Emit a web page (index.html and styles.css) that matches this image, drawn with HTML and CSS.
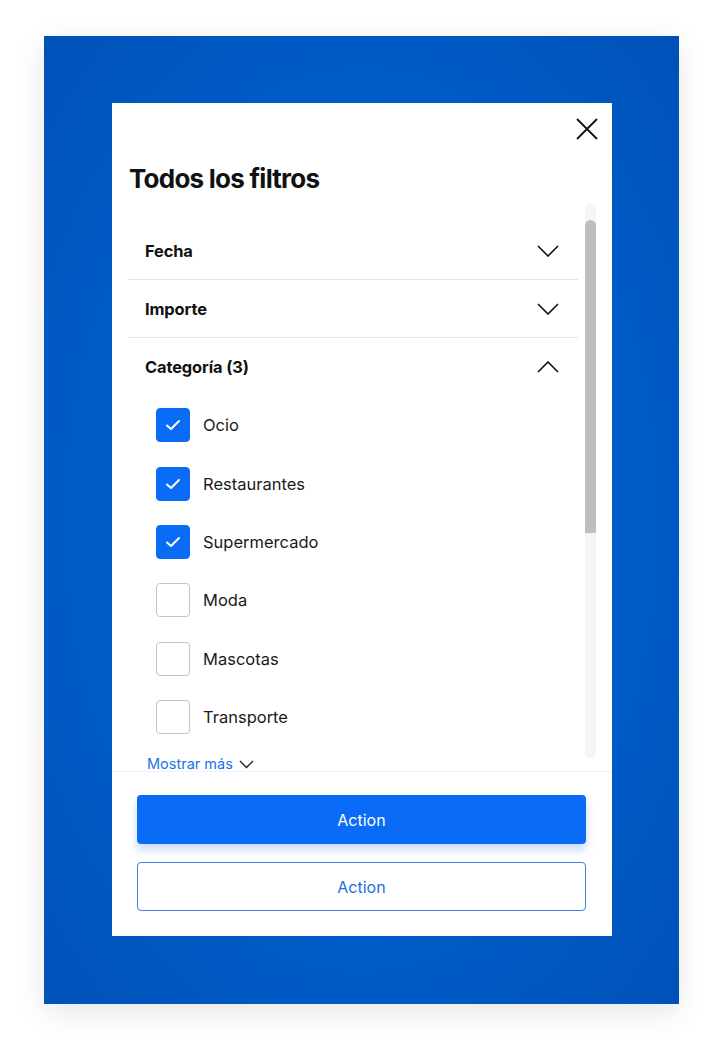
FILE: index.html
```html
<!DOCTYPE html>
<html lang="es">
<head>
<meta charset="utf-8">
<title>Todos los filtros</title>
<link rel="stylesheet" href="styles.css">
</head>
<body>
<div class="stage">
  <div class="modal">
    <div class="close-row">
      <button class="close" aria-label="Cerrar">
        <svg width="22" height="22" viewBox="0 0 22 22"><path d="M1 1 L21 21 M21 1 L1 21" stroke="#111" stroke-width="1.8" fill="none"/></svg>
      </button>
    </div>
    <h1 class="title">Todos los filtros</h1>
    <div class="scroll">
      <div class="list">
        <div class="acc-row bordered">
          <span class="acc-label">Fecha</span>
          <svg class="chev" width="22" height="12" viewBox="0 0 22 12"><path d="M1 1 L11 11 L21 1" stroke="#111" stroke-width="1.6" fill="none"/></svg>
        </div>
        <div class="acc-row bordered">
          <span class="acc-label">Importe</span>
          <svg class="chev" width="22" height="12" viewBox="0 0 22 12"><path d="M1 1 L11 11 L21 1" stroke="#111" stroke-width="1.6" fill="none"/></svg>
        </div>
        <div class="acc-row">
          <span class="acc-label">Categoría (3)</span>
          <svg class="chev" width="22" height="12" viewBox="0 0 22 12"><path d="M1 11 L11 1 L21 11" stroke="#111" stroke-width="1.6" fill="none"/></svg>
        </div>
        <div class="options">
          <label class="opt"><span class="box checked"><svg width="16" height="12" viewBox="0 0 16 12"><path d="M2 6.5 L6 10 L14 2" stroke="#fff" stroke-width="2" fill="none" stroke-linecap="round" stroke-linejoin="round"/></svg></span><span class="opt-label">Ocio</span></label>
          <label class="opt"><span class="box checked"><svg width="16" height="12" viewBox="0 0 16 12"><path d="M2 6.5 L6 10 L14 2" stroke="#fff" stroke-width="2" fill="none" stroke-linecap="round" stroke-linejoin="round"/></svg></span><span class="opt-label">Restaurantes</span></label>
          <label class="opt"><span class="box checked"><svg width="16" height="12" viewBox="0 0 16 12"><path d="M2 6.5 L6 10 L14 2" stroke="#fff" stroke-width="2" fill="none" stroke-linecap="round" stroke-linejoin="round"/></svg></span><span class="opt-label">Supermercado</span></label>
          <label class="opt"><span class="box"></span><span class="opt-label">Moda</span></label>
          <label class="opt"><span class="box"></span><span class="opt-label">Mascotas</span></label>
          <label class="opt"><span class="box"></span><span class="opt-label">Transporte</span></label>
        </div>
        <div class="more">
          <span>Mostrar más</span>
          <svg width="15" height="9" viewBox="0 0 15 9"><path d="M1 1 L7.5 7.5 L14 1" stroke="#222" stroke-width="1.4" fill="none"/></svg>
        </div>
      </div>
      <div class="track"><div class="thumb"></div></div>
    </div>
    <div class="footer">
      <button class="btn primary">Action</button>
      <button class="btn secondary">Action</button>
    </div>
  </div>
</div>
</body>
</html>
```

FILE: styles.css
```css
* { box-sizing: border-box; }
html, body { margin: 0; padding: 0; background: #fff; }
body {
  font-family: "Inter", "Libre Franklin", "Noto Sans", sans-serif;
  color: #111;
  width: 724px;
  height: 1057px;
  overflow: hidden;
}
.stage {
  margin: 36px 0 0 44px;
  width: 635px;
  height: 968px;
  padding: 67px 67px 68px 68px;
  background: radial-gradient(ellipse at 50% 50%, #006ad8 0%, #0060cc 45%, #0051b8 100%);
  box-shadow: 0 8px 28px rgba(0, 0, 0, 0.10);
}
.modal {
  width: 500px;
  height: 833px;
  background: #fff;
  display: flex;
  flex-direction: column;
}
.close-row {
  display: flex;
  justify-content: flex-end;
  padding: 15px 14px 0 0;
  height: 59px;
}
.close {
  border: 0;
  background: none;
  padding: 0;
  width: 22px;
  height: 22px;
  cursor: pointer;
}
.close svg { display: block; }
.title {
  margin: 0 0 0 17px;
  font-size: 26px;
  line-height: 32px;
  font-weight: 700;
  letter-spacing: -0.75px;
  height: 32px;
  padding-top: 1px;
}
.scroll {
  margin-top: 9px;
  height: 568px;
  display: flex;
  gap: 7px;
  padding: 0 16px;
}
.list {
  width: 450px;
  padding-top: 19px;
}
.acc-row {
  height: 58px;
  display: flex;
  align-items: center;
  justify-content: space-between;
  padding: 0 19px 0 17px;
}
.acc-row.bordered { border-bottom: 1px solid #e4e4e4; }
.acc-label {
  font-size: 16.4px;
  font-weight: 700;
  letter-spacing: -0.1px;
}
.chev { display: block; }
.options { display: flex; flex-direction: column; }
.opt {
  height: 58.4px;
  display: flex;
  align-items: center;
  padding-left: 28px;
  gap: 13px;
}
.box {
  width: 34px;
  height: 34px;
  border: 1px solid #c4c4c4;
  border-radius: 4px;
  background: #fff;
  display: flex;
  align-items: center;
  justify-content: center;
  flex: none;
}
.box.checked {
  background: #0a6cf6;
  border-color: #0a6cf6;
}
.box svg { display: block; }
.opt-label {
  font-size: 16.5px;
  color: #1a1a1a;
}
.more {
  display: flex;
  align-items: center;
  gap: 6px;
  padding-left: 19px;
  margin-top: 11px;
  font-size: 14.5px;
  color: #1a73e8;
  line-height: 14px;
  height: 14px;
}
.more svg { display: block; }
.track {
  width: 11px;
  height: 555px;
  background: #f5f5f5;
  border-radius: 6px;
  padding-top: 17px;
  flex: none;
}
.thumb {
  width: 11px;
  height: 313px;
  background: #bebebe;
  border-radius: 6px 6px 0 0;
}
.footer {
  border-top: 1px solid #f2f2f2;
  padding: 23px 26px 25px 25px;
  display: flex;
  flex-direction: column;
  gap: 18px;
}
.btn {
  height: 49px;
  width: 449px;
  border-radius: 4px;
  font-family: inherit;
  font-size: 16px;
  cursor: pointer;
}
.primary {
  background: #0a6cf6;
  color: #fff;
  border: 0;
  box-shadow: 0 6px 10px rgba(10, 90, 200, 0.22);
}
.secondary {
  background: #fff;
  color: #1a6fdc;
  border: 1px solid #3b82e0;
}
```
